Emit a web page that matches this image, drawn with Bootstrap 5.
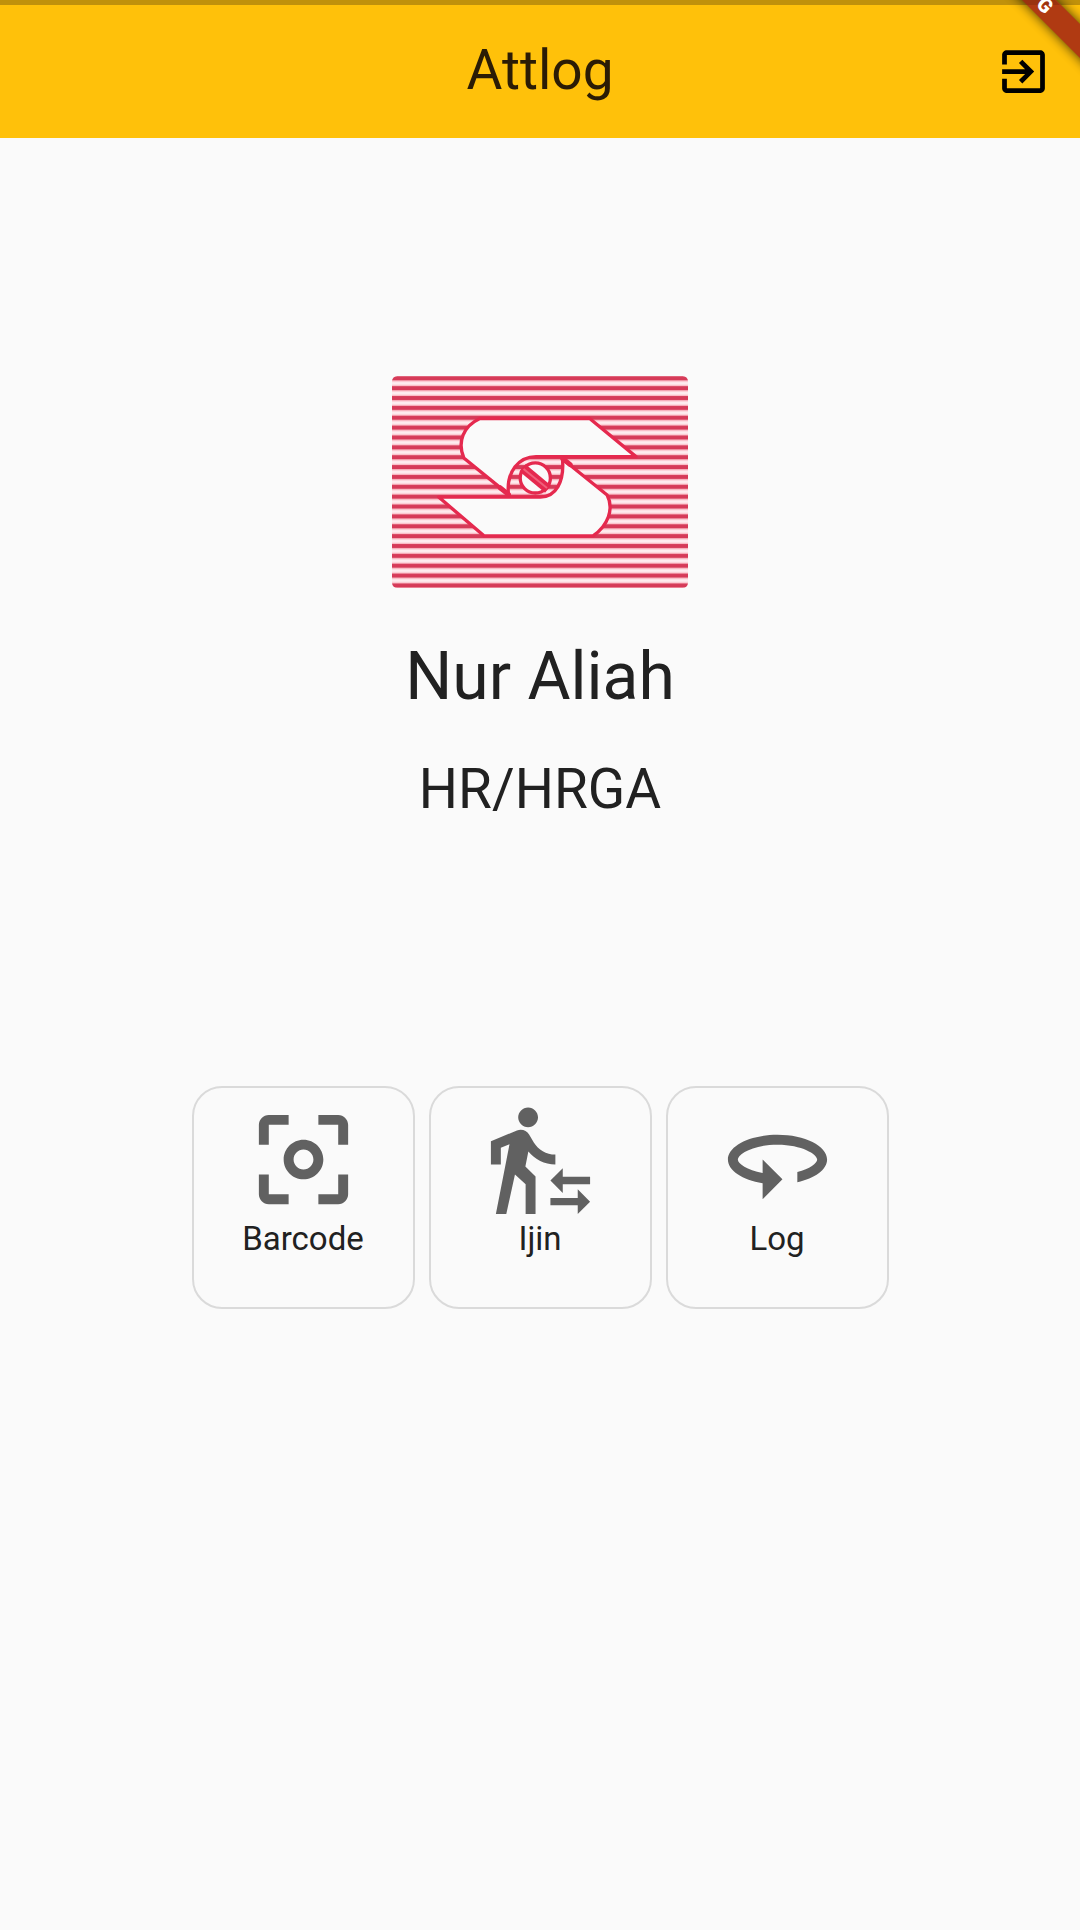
<!DOCTYPE html>
<html lang="id">
<head>
<meta charset="utf-8">
<meta name="viewport" content="width=device-width, initial-scale=1">
<title>Attlog</title>
<link href="https://cdn.jsdelivr.net/npm/bootstrap@5.3.0/dist/css/bootstrap.min.css" rel="stylesheet">
<style>
  body { font-family: Roboto, "Liberation Sans", sans-serif; background: #fafafa; color: #212121; }
  .app-header { background: #ffc10a; color: #2b1c05; border-top: 5px solid #c0910b; height: 138px; }
  .app-title { font-size: 55px; line-height: 66px; padding-bottom: 4px; }
  .side { flex: 1 1 0; padding-right: 28px; }
  .icon-btn { line-height: 0; color: #000; }
  .icon-btn svg { width: 57px; height: 57px; }
  .ribbon { width: 120px; height: 120px; pointer-events: none; }
  .profile { padding-top: 238px; }
  .brand-logo { width: 296px; height: 212px; }
  .person { font-size: 66px; line-height: 76px; margin-top: 51px; }
  .dept { font-size: 55px; line-height: 66px; margin-top: 41px; }
  .menu { margin-top: 264px; gap: 14px; }
  .tile { width: 223px; height: 223px; padding: 12px 0 0; border: 2px solid #dadada; border-radius: 30px; background: transparent; color: #212121; font-size: 33px; line-height: 40px; }
  .tile svg { width: 119px; height: 119px; fill: #616161; }
</style>
<script src="https://cdn.jsdelivr.net/npm/bootstrap@5.3.0/dist/js/bootstrap.bundle.min.js"></script>
</head>
<body class="min-vh-100 position-relative overflow-x-hidden">
<header class="app-header d-flex align-items-center">
  <div class="side"></div>
  <h1 class="app-title fw-normal m-0">Attlog</h1>
  <div class="side d-flex justify-content-end">
    <button type="button" class="icon-btn border-0 bg-transparent p-0" aria-label="Keluar">
      <svg viewBox="0 0 24 24" fill="currentColor"><path d="M10.09 15.59L11.5 17l5-5-5-5-1.41 1.41L12.67 11H3v2h9.67l-2.58 2.59zM19 3H5c-1.11 0-2 .9-2 2v4h2V5h14v14H5v-4H3v4c0 1.1.89 2 2 2h14c1.1 0 2-.9 2-2V5c0-1.1-.9-2-2-2z"/></svg>
    </button>
  </div>
</header>

<svg class="ribbon position-absolute top-0 end-0" viewBox="0 0 120 120">
  <defs><filter id="shade" x="-50%" y="-50%" width="200%" height="200%"><feGaussianBlur stdDeviation="6"/></filter></defs>
  <path d="M42-20L160 98V64L76-20z" fill="#000" opacity=".75" filter="url(#shade)"/>
  <path d="M42-20L160 98V64L76-20z" fill="#b03a12"/>
  <path d="M62 0h33l5 5H67z" fill="#000" opacity=".12"/>
  <text transform="translate(85 5) rotate(45)" text-anchor="middle" y="7" font-family="Roboto, sans-serif" font-size="20" font-weight="900" fill="#fff">G</text>
</svg>

<main class="profile container-fluid d-flex flex-column align-items-center">
  <svg class="brand-logo" viewBox="36 33 882 634" preserveAspectRatio="none" role="img" aria-label="Logo">
    <defs>
      <pattern id="bars" x="0" y="25" width="40" height="29.5" patternUnits="userSpaceOnUse">
        <rect width="40" height="29.5" fill="#feecef"/>
        <rect y="5" width="40" height="20" fill="#fbbcc6"/>
        <rect y="9" width="40" height="12" fill="#d63a58"/>
      </pattern>
      <clipPath id="card"><rect x="36" y="33" width="882" height="634" rx="16"/></clipPath>
    </defs>
    <g clip-path="url(#card)">
      <rect x="36" y="33" width="882" height="634" fill="url(#bars)"/>
      <g fill="#fafafa" stroke="#e5294e" stroke-width="10" stroke-linejoin="round">
        <path d="M298 160H625L763 274H465C415 274 376 318 383 387L250 278C230 230 248 183 298 160z"/>
        <path d="M175 395H478C524 395 550 350 544 281L677 389C698 430 680 480 635 511H310z"/>
        <circle cx="463" cy="338" r="45"/>
      </g>
      <path d="M425 308L501 371" stroke="#e5294e" stroke-width="28"/>
      <path d="M428 311L498 368" stroke="#f0607a" stroke-width="6"/>
      <path d="M383 387l-25-20M545 280l22 18" stroke="#e5294e" stroke-width="15" stroke-linecap="round"/>
    </g>
  </svg>
  <h2 class="person fw-normal mb-0">Nur Aliah</h2>
  <p class="dept mb-0">HR/HRGA</p>

  <nav class="menu d-flex flex-wrap justify-content-center" aria-label="Menu">
    <button type="button" class="tile d-flex flex-column align-items-center">
      <svg viewBox="0 0 24 24"><path d="M5 15H3v4c0 1.1.9 2 2 2h4v-2H5v-4zM5 5h4V3H5c-1.1 0-2 .9-2 2v4h2V5zm14-2h-4v2h4v4h2V5c0-1.1-.9-2-2-2zm0 16h-4v2h4c1.100 0 2-.9 2-2v-4h-2v4zM12 8c-2.210 0-4 1.790-4 4s1.790 4 4 4 4-1.790 4-4-1.790-4-4-4zm0 6c-1.100 0-2-.9-2-2s.9-2 2-2 2 .9 2 2-.9 2-2 2z"/></svg>
      <span>Barcode</span>
    </button>
    <button type="button" class="tile d-flex flex-column align-items-center">
      <svg viewBox="0 0 24 24"><path d="M16.490 15.500v-1.750L14 16.250l2.490 2.500V17H22v-1.500zM19.510 19.750H14v1.500h5.510V23L22 20.500 19.510 18zM9.500 5.500c1.100 0 2-.9 2-2s-.9-2-2-2-2 .9-2 2 .9 2 2 2zM5.750 8.900L3 23h2.100l1.750-8L9 17v6h2v-7.550L8.950 13.400l.6-3C10.850 12 12.800 13 15 13v-2c-1.850 0-3.450-1-4.350-2.450l-.95-1.600C9.350 6.350 8.700 6 8 6c-.25 0-.5.050-.75.150L2 8.300V13h2V9.650z"/></svg>
      <span>Ijin</span>
    </button>
    <button type="button" class="tile d-flex flex-column align-items-center">
      <svg viewBox="0 0 24 24"><path d="M12 7C6.480 7 2 9.240 2 12c0 2.240 2.940 4.130 7 4.770V20l4-4-4-4v2.730c-3.150-.56-5-1.900-5-2.730 0-1.060 3.040-3 8-3s8 1.940 8 3c0 .73-1.460 1.890-4 2.530v2.050c3.530-.77 6-2.530 6-4.580 0-2.760-4.480-5-10-5z"/></svg>
      <span>Log</span>
    </button>
  </nav>
</main>
</body>
</html>
